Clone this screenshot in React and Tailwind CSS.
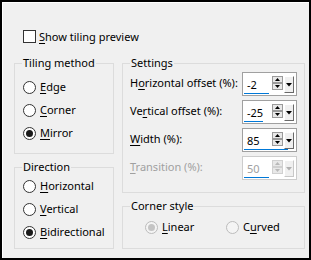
import React from 'react'

const U = ({ children }) => (
  <span className="underline decoration-1 underline-offset-[2px]">{children}</span>
)

const Radio = ({ checked, disabled, children, className = "" }) => (
  <div className={"flex items-center h-[16px] " + className}>
    <span
      className={
        "w-[13px] h-[13px] rounded-full border flex items-center justify-center shrink-0 " +
        (disabled ? "border-[#bcbcbc] bg-[#f4f4f4]" : "border-[#333333] bg-white")
      }
    >
      {checked && (
        <span
          className={
            "w-[7px] h-[7px] rounded-full " + (disabled ? "bg-[#c4c4c4]" : "bg-[#1a1a1a]")
          }
        />
      )}
    </span>
    <span className="ml-[4px] text-black">{children}</span>
  </div>
)

const GroupBox = ({ title, className = "", children }) => (
  <div className={"relative border border-[#dcdcdc] " + className}>
    <span className="absolute -top-[9px] left-[7px] px-[1px] bg-[#f0f0f0] leading-[16px] text-black">
      {title}
    </span>
    {children}
  </div>
)

const SpinArrows = ({ disabled }) => {
  const c = disabled ? "#b8b8b8" : "#000000"
  const b = disabled ? "#d0d0d0" : "#9a9a9a"
  return (
    <svg width="11" height="14" viewBox="0 0 11 14" className="shrink-0">
      <rect x="0.5" y="0.5" width="10" height="6" fill="#e8e8e8" stroke={b} />
      <rect x="0.5" y="7.5" width="10" height="6" fill="#e8e8e8" stroke={b} />
      <path d="M5.5 2 L8 5 L3 5 Z" fill={c} />
      <path d="M3 9 L8 9 L5.5 12 Z" fill={c} />
    </svg>
  )
}

const DropBtn = ({ disabled }) => (
  <div
    className={
      "w-[10px] h-[17px] ml-[1px] border-t border-l border-r border-b flex items-center justify-center shrink-0 " +
      (disabled
        ? "bg-[#f0f0f0] border-t-white border-l-white border-r-[#c8c8c8] border-b-[#c8c8c8]"
        : "bg-[#f0f0f0] border-t-white border-l-white border-r-[#696969] border-b-[#696969]")
    }
  >
    <svg width="6" height="4" viewBox="0 0 6 4">
      <path d="M0 0 L6 0 L3 3.5 Z" fill={disabled ? "#b0b0b0" : "#000000"} />
    </svg>
  </div>
)

const Spinner = ({ value, pct, disabled }) => (
  <div
    className={
      "w-[55px] h-[24px] border bg-white flex flex-col shrink-0 " +
      (disabled ? "border-[#cccccc]" : "border-[#a0a0a0]")
    }
  >
    <div className="flex items-start mt-[3px] h-[17px]">
      <span
        className={
          "flex-1 pl-[4px] leading-[17px] " + (disabled ? "text-[#a0a0a0]" : "text-black")
        }
      >
        {value}
      </span>
      <SpinArrows disabled={disabled} />
      <DropBtn disabled={disabled} />
      <span className="w-[2px]" />
    </div>
    <div className="mt-auto mb-[1px] ml-[1px] h-[3px] bg-[#0078d7]" style={{ width: pct * 50 + "px" }} />
  </div>
)

const SettingRow = ({ label, value, pct, disabled }) => (
  <div className="flex items-center justify-between h-[24px]">
    <span className={"leading-[16px] -mt-[3px] " + (disabled ? "text-[#a0a0a0]" : "text-black")}>
      {label}
    </span>
    <Spinner value={value} pct={pct} disabled={disabled} />
  </div>
)

export default function App() {
  return (
    <div
      className="w-[311px] h-[260px] border-2 border-black bg-[#f0f0f0] text-[11px] text-black"
      style={{ fontFamily: '"Noto Sans", "Segoe UI", sans-serif' }}
    >
      <div className="h-full border-t border-l border-white pl-[11px] pt-[27px]">
        <div className="flex items-center h-[13px] ml-[9px]">
          <span className="w-[13px] h-[13px] border border-[#333333] bg-white shrink-0" />
          <span className="ml-[3px] leading-[16px]">
            <U>S</U>how tiling preview
          </span>
        </div>

        <div className="flex gap-[8px] mt-[20px]">
          <div className="w-[100px] flex flex-col">
            <GroupBox title="Tiling method" className="h-[91px] pt-[15px] pl-[8px] flex flex-col gap-[7px]">
              <Radio><U>E</U>dge</Radio>
              <Radio><U>C</U>orner</Radio>
              <Radio checked><U>M</U>irror</Radio>
            </GroupBox>
            <GroupBox title="Direction" className="h-[82px] mt-[13px] pt-[10px] pl-[8px] flex flex-col gap-[7px]">
              <Radio><U>H</U>orizontal</Radio>
              <Radio><U>V</U>ertical</Radio>
              <Radio checked><U>B</U>idirectional</Radio>
            </GroupBox>
          </div>

          <div className="w-[183px] flex flex-col">
            <GroupBox title="Settings" className="h-[130px] pt-[8px] pl-[7px] pr-[7px] flex flex-col gap-[4px]">
              <SettingRow label={<>H<U>o</U>rizontal offset (%):</>} value="-2" pct={0.49} />
              <SettingRow label={<>Ve<U>r</U>tical offset (%):</>} value="-25" pct={0.375} />
              <SettingRow label={<><U>W</U>idth (%):</>} value="85" pct={0.88} />
              <SettingRow label={<><U>T</U>ransition (%):</>} value="50" pct={0.5} disabled />
            </GroupBox>
            <GroupBox title="Corner style" className="h-[43px] mt-[13px] pt-[12px] pl-[22px] flex">
              <Radio checked disabled className="w-[81px]"><U>L</U>inear</Radio>
              <Radio disabled>C<U>u</U>rved</Radio>
            </GroupBox>
          </div>
        </div>
      </div>
    </div>
  )
}
